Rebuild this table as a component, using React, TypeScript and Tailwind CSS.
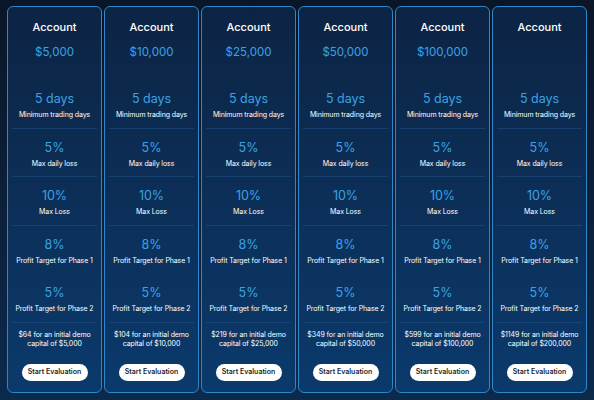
import React from 'react';

const plans = [
  { amount: '$5,000', price: '$64', capital: '$5,000' },
  { amount: '$10,000', price: '$104', capital: '$10,000' },
  { amount: '$25,000', price: '$219', capital: '$25,000' },
  { amount: '$50,000', price: '$349', capital: '$50,000' },
  { amount: '$100,000', price: '$599', capital: '$100,000' },
  { amount: '', price: '$1149', capital: '$200,000' },
];

const rules = [
  { value: '5 days', label: 'Minimum trading days', line: true },
  { value: '5%', label: 'Max daily loss', line: true },
  { value: '10%', label: 'Max Loss', line: true },
  { value: '8%', label: 'Profit Target for Phase 1', line: false },
  { value: '5%', label: 'Profit Target for Phase 2', line: true },
];

const PlanCard = ({ plan }: { plan: (typeof plans)[number] }) => {
  return (
    <div className="flex flex-col rounded-[6px] border border-[#2f86c9] bg-gradient-to-b from-[#0c2444] to-[#0a3a6c] text-center">
      <div className="h-[73px] shrink-0 pt-[13px]">
        <p className="text-[11px] font-medium leading-[14px] text-white">Account</p>
        <p className="mt-[11px] h-[15px] text-[11.5px] leading-[15px] text-[#3aa3e6]">{plan.amount}</p>
      </div>
      {rules.map((rule, i) => (
        <div
          key={i}
          className={`mx-[4px] h-[48.5px] shrink-0 pt-[11px] ${rule.line ? 'border-b border-[#1f4f80]/60' : ''}`}
        >
          <p className="text-[12.5px] leading-[16px] text-[#3aa3e6]">{rule.value}</p>
          <p className="-mx-[4px] mt-[3px] whitespace-nowrap text-[7px] leading-[10px] tracking-[-0.1px] text-white">
            {rule.label}
          </p>
        </div>
      ))}
      <div className="flex flex-1 flex-col items-center pt-[7px]">
        <p className="whitespace-nowrap text-[7px] leading-[9.5px] tracking-[-0.1px] text-white">
          {plan.price} for an initial demo
          <br />
          capital of {plan.capital}
        </p>
        <button className="mt-[15px] h-[17px] w-[66px] rounded-full bg-white text-[7px] font-semibold text-[#1a1f2b]">
          Start Evaluation
        </button>
      </div>
    </div>
  );
};

const App = () => {
  return (
    <div
      className="h-[400px] w-[594px] bg-gradient-to-b from-[#0a1628] to-[#0b2a4c] px-[7px] pt-[6px] pb-[7px]"
      style={{ fontFamily: 'Inter, "Noto Sans", sans-serif' }}
    >
      <div className="grid h-full grid-cols-6 gap-[2px]">
        {plans.map((plan, i) => (
          <PlanCard key={i} plan={plan} />
        ))}
      </div>
    </div>
  );
};

export default App;
